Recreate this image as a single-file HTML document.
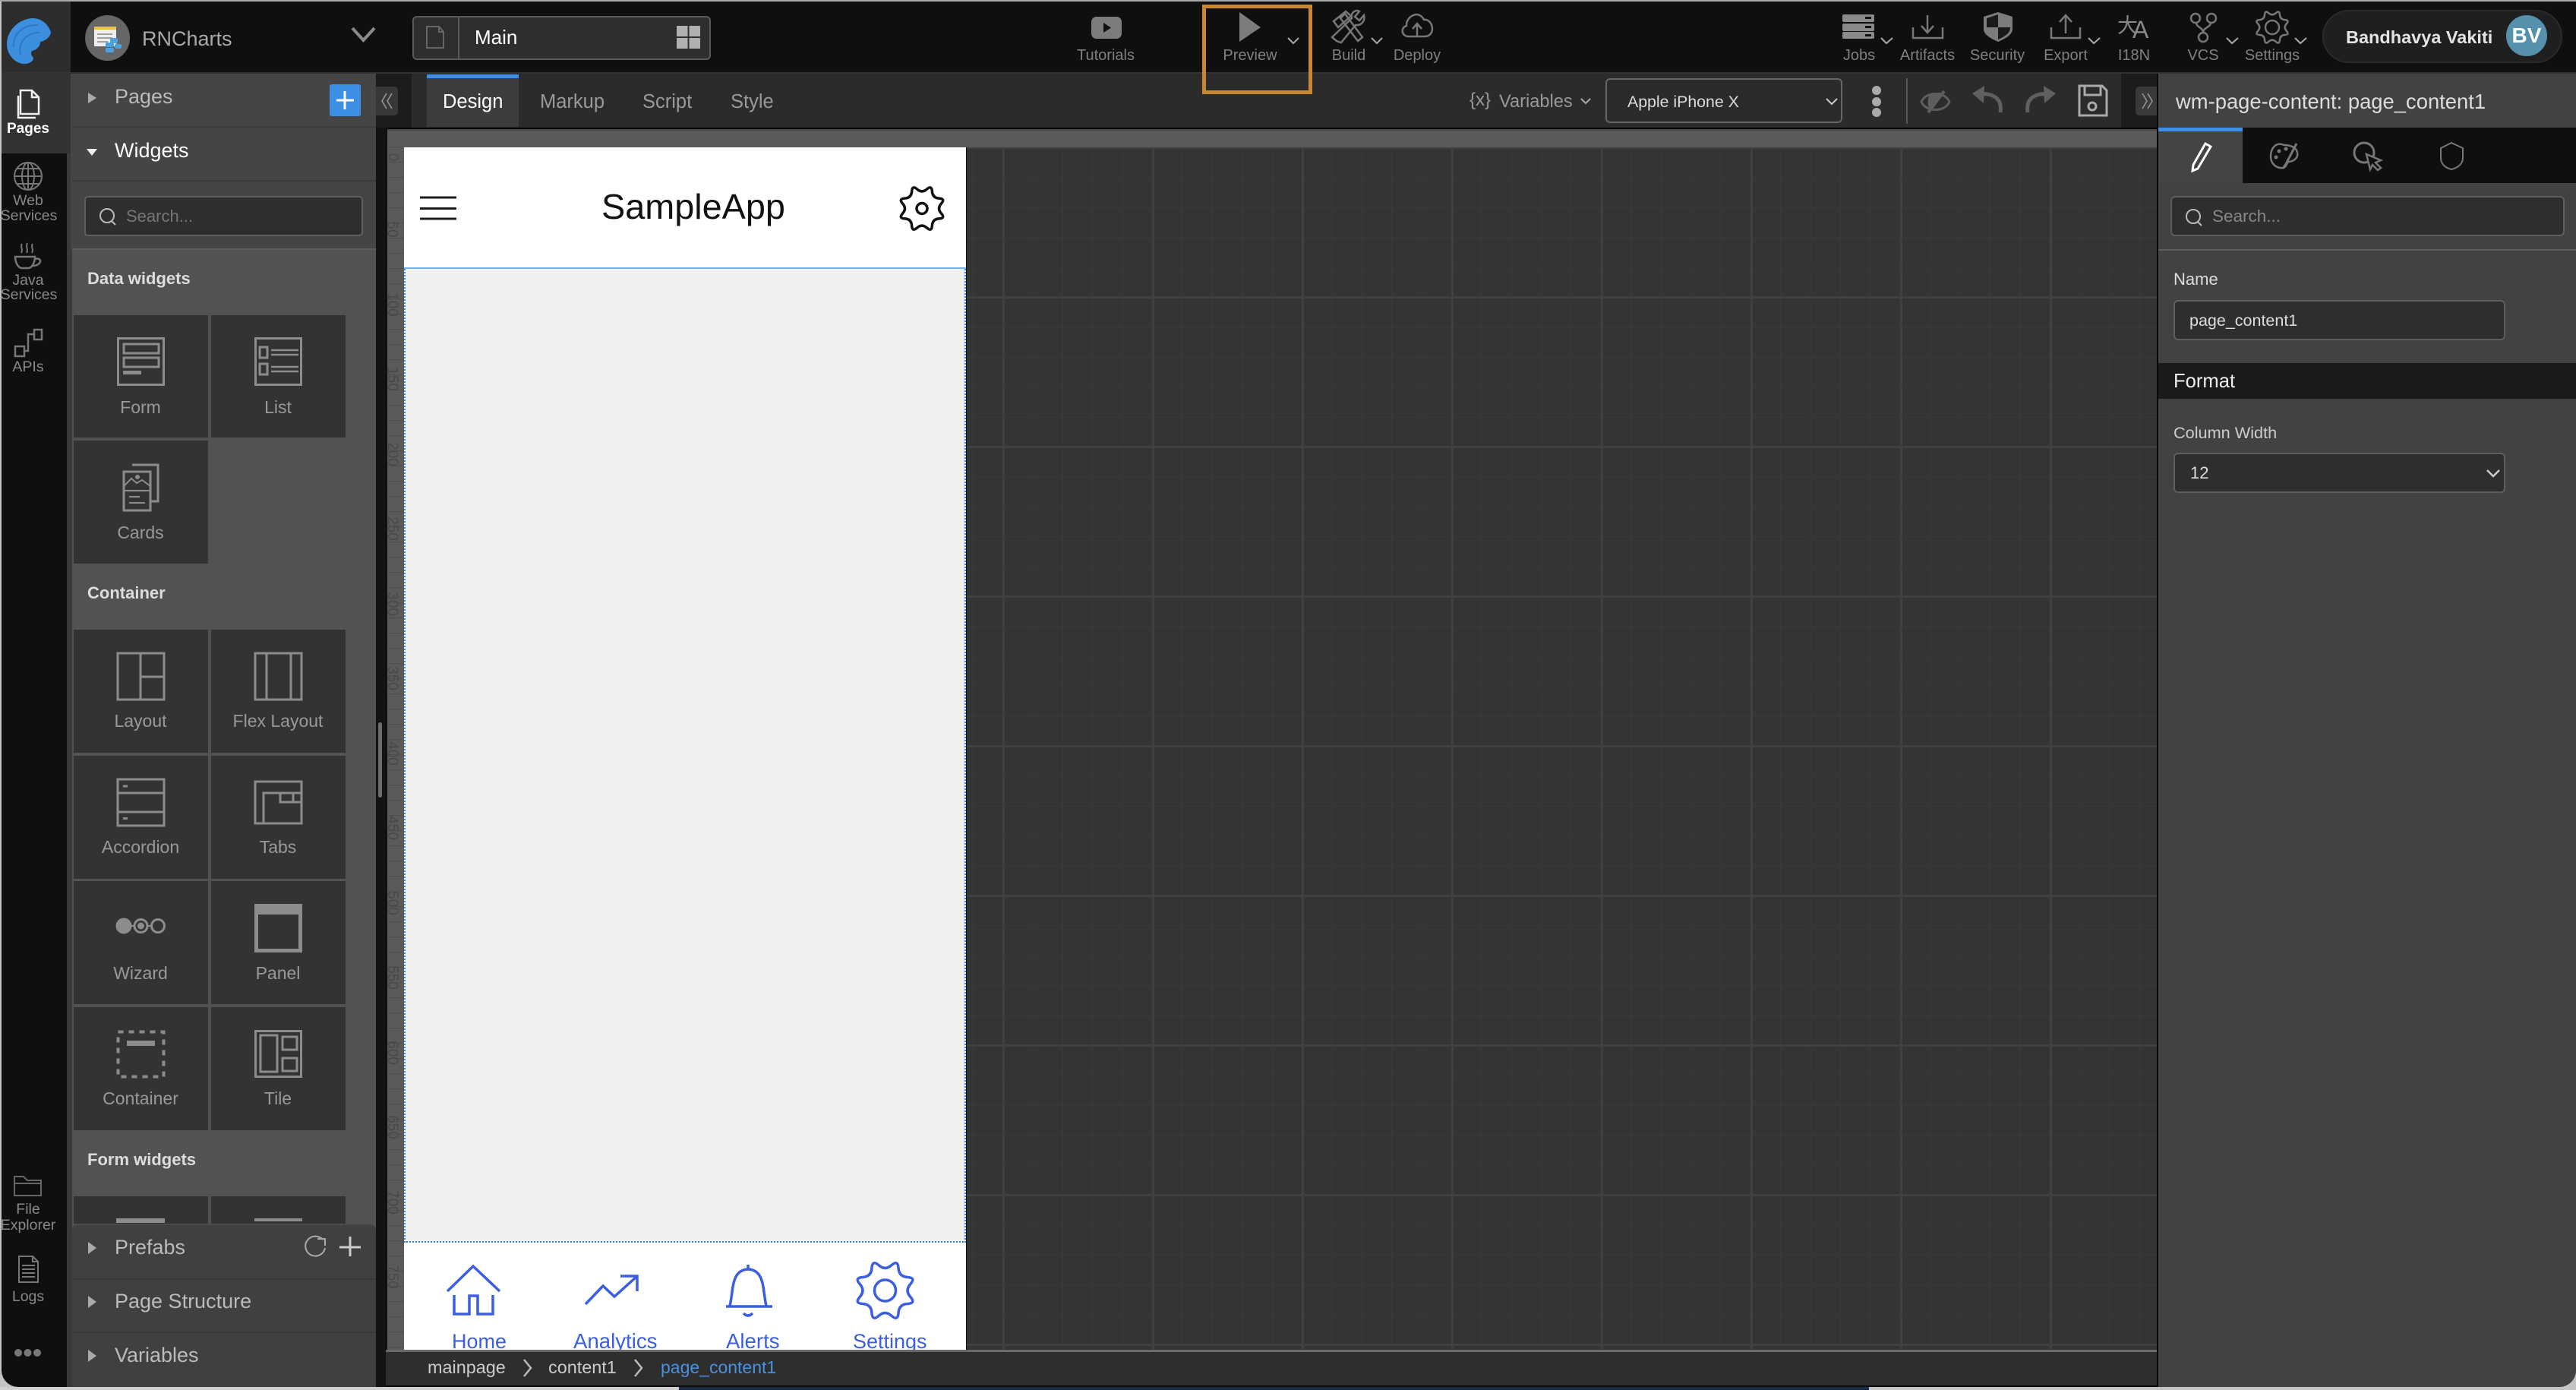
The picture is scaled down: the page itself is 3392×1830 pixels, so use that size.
<!DOCTYPE html>
<html><head><meta charset="utf-8"><title>RNCharts</title>
<style>
html,body{margin:0;padding:0;width:3392px;height:1830px;overflow:hidden;background:#c4c4c4}
*{box-sizing:border-box}
body{position:relative;font-family:"Liberation Sans",sans-serif}
.b{position:absolute}
.t{position:absolute;white-space:nowrap;line-height:40px;height:40px;margin-top:-20px}
.c{transform:translateX(-50%)}
.lb{font-size:23px;color:#999}
.tb{font-size:20px;color:#808080}
.tile{position:absolute;background:#333;width:177px}
.in{position:absolute;background:#2e2e2e;border:2px solid #5e5e5e;border-radius:6px}
svg{position:absolute;left:0;top:0}
</style></head><body>
<div class="b" style="left:0;top:1826px;width:894px;height:4px;background:#d0d0d0"></div>
<div class="b" style="left:894px;top:1826px;width:1567px;height:4px;background:#1a2c4a"></div>
<div class="b" style="left:2px;top:2px;width:3390px;height:1824px;background:#0f0f0f;border-radius:0 0 22px 22px;overflow:hidden" id="frame"></div>
<div class="b" style="left:0;top:0;width:3392px;height:2px;background:#a8a8a8"></div>

<!-- logo block -->
<div class="b" style="left:2px;top:2px;width:91px;height:93px;background:#2d2d2d"></div>
<!-- row2 separators -->
<div class="b" style="left:2px;top:95px;width:3390px;height:2px;background:#333"></div>
<!-- rail -->
<div class="b" style="left:2px;top:97px;width:91px;height:105px;background:#333"></div>
<div class="b" style="left:88px;top:202px;width:7px;height:1624px;background:#3a3a3a"></div>
<!-- left panel -->
<div class="b" style="left:93px;top:97px;width:402px;height:232px;background:#454545"></div>
<div class="b" style="left:95px;top:166px;width:400px;height:2px;background:#3a3a3a"></div>
<div class="b" style="left:95px;top:237px;width:400px;height:2px;background:#3a3a3a"></div>
<div class="b" style="left:95px;top:327px;width:400px;height:2px;background:#5c5c5c"></div>
<div class="b" style="left:95px;top:329px;width:400px;height:1300px;background:#525252"></div>
<div class="in" style="left:111px;top:258px;width:367px;height:53px;border-radius:5px"></div>
<div class="b" style="left:434px;top:111px;width:41px;height:42px;background:#3d8fe6;border-radius:3px"></div>

<!-- tiles -->
<div class="tile" style="left:97px;top:415px;height:161px"></div>
<div class="tile" style="left:278px;top:415px;height:161px"></div>
<div class="tile" style="left:97px;top:580px;height:162px"></div>
<div class="tile" style="left:97px;top:829px;height:162px"></div>
<div class="tile" style="left:278px;top:829px;height:162px"></div>
<div class="tile" style="left:97px;top:995px;height:162px"></div>
<div class="tile" style="left:278px;top:995px;height:162px"></div>
<div class="tile" style="left:97px;top:1160px;height:162px"></div>
<div class="tile" style="left:278px;top:1160px;height:162px"></div>
<div class="tile" style="left:97px;top:1326px;height:162px"></div>
<div class="tile" style="left:278px;top:1326px;height:162px"></div>
<div class="tile" style="left:97px;top:1575px;height:36px"></div>
<div class="tile" style="left:278px;top:1575px;height:36px"></div>
<div class="b" style="left:153px;top:1604px;width:64px;height:6px;background:#8c8c8c"></div>
<div class="b" style="left:335px;top:1604px;width:63px;height:4px;background:#8c8c8c"></div>

<!-- bottom accordion -->
<div class="b" style="left:95px;top:1611px;width:400px;height:215px;background:#404040;border-radius:8px 8px 0 0;border-top:2px solid #4a4a4a"></div>
<div class="b" style="left:95px;top:1683px;width:400px;height:2px;background:#383838"></div>
<div class="b" style="left:95px;top:1753px;width:400px;height:2px;background:#383838"></div>

<!-- gutter -->
<div class="b" style="left:495px;top:97px;width:13px;height:1729px;background:#131313"></div>
<div class="b" style="left:495px;top:97px;width:47px;height:71px;background:#1c1c1c"></div>
<div class="b" style="left:495px;top:114px;width:29px;height:38px;background:#383838;border-radius:0 5px 5px 0"></div>

<!-- toolbar -->
<div class="b" style="left:542px;top:97px;width:2251px;height:71px;background:#2b2b2b"></div>
<div class="b" style="left:2793px;top:97px;width:47px;height:71px;background:#1c1c1c"></div>
<div class="b" style="left:562px;top:98px;width:121px;height:69px;background:#3c3c3c"></div>
<div class="b" style="left:562px;top:98px;width:121px;height:5px;background:#3d8fe6"></div>
<div class="b" style="left:508px;top:168px;width:2332px;height:2px;background:#050505"></div>
<div class="b" style="left:2114px;top:103px;width:312px;height:59px;background:#2b2b2b;border:2px solid #666;border-radius:6px"></div>
<div class="b" style="left:2510px;top:103px;width:2px;height:60px;background:#555"></div>
<div class="b" style="left:2812px;top:114px;width:30px;height:38px;background:#3a3a3a;border-radius:5px 0 0 5px"></div>

<!-- rulers -->
<div class="b" style="left:510px;top:170px;width:2330px;height:24px;background:#5a5a5a"></div>
<div class="b" style="left:510px;top:170px;width:22px;height:1607px;background:repeating-linear-gradient(180deg,#5a5a5a 0,#5a5a5a 19px,#4e4e4e 19px,#4e4e4e 20px) 0 4px"></div>
<div class="b" style="left:510px;top:170px;width:2330px;height:2px;background:#4a4a4a"></div>
<!-- canvas -->
<div class="b" style="left:532px;top:194px;width:2308px;height:1583px;background-color:#343434;background-image:linear-gradient(90deg,#404040 3px,transparent 3px),linear-gradient(180deg,#404040 3px,transparent 3px),linear-gradient(90deg,#383838 1.500px,transparent 1.500px),linear-gradient(180deg,#383838 1.500px,transparent 1.500px);background-size:197px 197px,197px 197px,39.4px 39.4px,39.4px 39.4px;background-position:0 -1px,0 -1px,0 0,0 0"></div>
<!-- phone -->
<div class="b" style="left:532px;top:194px;width:741px;height:1583px;background:#fff;border-right:1px solid #111"></div>
<div class="b" style="left:532px;top:352px;width:740px;height:2px;background:#6fb1f2"></div>
<div class="b" style="left:532px;top:354px;width:740px;height:1282px;background:#f0f0f0;border:2px dotted #2d86e6;border-top:0"></div>
<!-- breadcrumb -->
<div class="b" style="left:508px;top:1777px;width:2332px;height:3px;background:#6a6a6a"></div>
<div class="b" style="left:508px;top:1780px;width:2332px;height:46px;background:#2e2e2e;border-bottom:2px solid #0a0a0a"></div>
<!-- right panel -->
<div class="b" style="left:2840px;top:97px;width:2px;height:1729px;background:#0a0a0a"></div>
<div class="b" style="left:2842px;top:97px;width:550px;height:1729px;background:#424242;border-radius:0 0 22px 0"></div>
<div class="b" style="left:2842px;top:168px;width:550px;height:73px;background:#0f0f0f"></div>
<div class="b" style="left:2842px;top:168px;width:111px;height:73px;background:#444"></div>
<div class="b" style="left:2842px;top:168px;width:111px;height:5px;background:#3d8fe6"></div>
<div class="in" style="left:2858px;top:258px;width:519px;height:53px"></div>
<div class="b" style="left:2842px;top:328px;width:550px;height:2px;background:#5e5e5e"></div>
<div class="in" style="left:2862px;top:395px;width:437px;height:53px"></div>
<div class="b" style="left:2842px;top:478px;width:550px;height:47px;background:#1a1a1a"></div>
<div class="in" style="left:2862px;top:596px;width:437px;height:53px"></div>

<!-- page selector + pill -->
<div class="b" style="left:543px;top:21px;width:393px;height:58px;background:#2e2e2e;border:2px solid #5a5a5a;border-radius:6px"></div>
<div class="b" style="left:603px;top:22px;width:2px;height:56px;background:#5a5a5a"></div>
<div class="b" style="left:3058px;top:13px;width:316px;height:70px;background:#1f1f1f;border:2px solid #2a2a2a;border-radius:35px"></div>
<div class="b" style="left:3300px;top:20px;width:54px;height:54px;border-radius:50%;background:#5591ac"></div>

<!-- TEXT -->
<div class="t" style="left:187px;top:51px;font-size:27px;color:#aaa">RNCharts</div>
<div class="t" style="left:625px;top:49px;font-size:26px;color:#fff">Main</div>
<div class="t" style="left:151px;top:127px;font-size:27px;color:#bbb">Pages</div>
<div class="t" style="left:151px;top:198px;font-size:27px;color:#fff">Widgets</div>
<div class="t" style="left:166px;top:285px;font-size:22px;color:#777">Search...</div>
<div class="t" style="left:115px;top:367px;font-size:22px;font-weight:bold;color:#ddd">Data widgets</div>
<div class="t" style="left:115px;top:781px;font-size:22px;font-weight:bold;color:#ddd">Container</div>
<div class="t" style="left:115px;top:1527px;font-size:22px;font-weight:bold;color:#ddd">Form widgets</div>
<div class="t c lb" style="left:185px;top:536px">Form</div>
<div class="t c lb" style="left:366px;top:536px">List</div>
<div class="t c lb" style="left:185px;top:701px">Cards</div>
<div class="t c lb" style="left:185px;top:949px">Layout</div>
<div class="t c lb" style="left:366px;top:949px">Flex Layout</div>
<div class="t c lb" style="left:185px;top:1115px">Accordion</div>
<div class="t c lb" style="left:366px;top:1115px">Tabs</div>
<div class="t c lb" style="left:185px;top:1281px">Wizard</div>
<div class="t c lb" style="left:366px;top:1281px">Panel</div>
<div class="t c lb" style="left:185px;top:1446px">Container</div>
<div class="t c lb" style="left:366px;top:1446px">Tile</div>
<div class="t" style="left:151px;top:1642px;font-size:27px;color:#bbb">Prefabs</div>
<div class="t" style="left:151px;top:1713px;font-size:27px;color:#bbb">Page Structure</div>
<div class="t" style="left:151px;top:1784px;font-size:27px;color:#bbb">Variables</div>

<div class="t c" style="left:37px;top:170px;font-size:19px;font-weight:bold;color:#fff">Pages</div>
<div class="t c" style="left:37px;top:264px;font-size:19.5px;color:#888">Web</div>
<div class="t c" style="left:38px;top:284px;font-size:19.5px;color:#888">Services</div>
<div class="t c" style="left:37px;top:369px;font-size:19.5px;color:#888">Java</div>
<div class="t c" style="left:38px;top:388px;font-size:19.5px;color:#888">Services</div>
<div class="t c" style="left:37px;top:483px;font-size:19.5px;color:#888">APIs</div>
<div class="t c" style="left:37px;top:1592px;font-size:19.5px;color:#888">File</div>
<div class="t c" style="left:37px;top:1613px;font-size:19.5px;color:#888">Explorer</div>
<div class="t c" style="left:37px;top:1707px;font-size:19.5px;color:#888">Logs</div>

<div class="t" style="left:583px;top:134px;font-size:25.5px;color:#fff">Design</div>
<div class="t" style="left:711px;top:134px;font-size:25.5px;color:#999">Markup</div>
<div class="t" style="left:846px;top:134px;font-size:25.5px;color:#999">Script</div>
<div class="t" style="left:962px;top:134px;font-size:25.5px;color:#999">Style</div>
<div class="t" style="left:1935px;top:132px;font-size:24px;color:#999">{x}</div>
<div class="t" style="left:1974px;top:134px;font-size:23.600px;color:#999">Variables</div>
<div class="t" style="left:2143px;top:134px;font-size:21.3px;color:#ddd">Apple iPhone X</div>
<div class="t" style="left:2865px;top:134px;font-size:27.4px;color:#ddd">wm-page-content: page_content1</div>

<div class="t c tb" style="left:1456px;top:73px">Tutorials</div>
<div class="t c tb" style="left:1646px;top:73px">Preview</div>
<div class="t c tb" style="left:1776px;top:73px">Build</div>
<div class="t c tb" style="left:1866px;top:73px">Deploy</div>
<div class="t c tb" style="left:2448px;top:73px">Jobs</div>
<div class="t c tb" style="left:2538px;top:73px">Artifacts</div>
<div class="t c tb" style="left:2630px;top:73px">Security</div>
<div class="t c tb" style="left:2720px;top:73px">Export</div>
<div class="t c tb" style="left:2810px;top:73px">I18N</div>
<div class="t c tb" style="left:2901px;top:73px">VCS</div>
<div class="t c tb" style="left:2992px;top:73px">Settings</div>
<div class="t" style="left:3089px;top:49px;font-size:23.5px;font-weight:bold;color:#e4e4e4">Bandhavya Vakiti</div>
<div class="t c" style="left:3327px;top:47px;font-size:28px;font-weight:bold;color:#fff">BV</div>

<div class="t" style="left:2913px;top:285px;font-size:22.5px;color:#888">Search...</div>
<div class="t" style="left:2862px;top:368px;font-size:22px;color:#ddd">Name</div>
<div class="t" style="left:2883px;top:422px;font-size:21.5px;color:#ddd">page_content1</div>
<div class="t" style="left:2862px;top:502px;font-size:25.6px;color:#eee">Format</div>
<div class="t" style="left:2862px;top:570px;font-size:21.7px;color:#ccc">Column Width</div>
<div class="t" style="left:2884px;top:623px;font-size:22px;color:#ddd">12</div>

<div class="t" style="left:792px;top:272px;font-size:46.8px;color:#111">SampleApp</div>
<div class="b" style="left:532px;top:1750px;width:740px;height:27px;overflow:hidden">
  <div class="t" style="left:63px;top:16px;font-size:27px;color:#3b5fe0">Home</div>
  <div class="t" style="left:223px;top:16px;font-size:27.6px;color:#3b5fe0">Analytics</div>
  <div class="t" style="left:424px;top:16px;font-size:27.6px;color:#3b5fe0">Alerts</div>
  <div class="t" style="left:591px;top:16px;font-size:27px;color:#3b5fe0">Settings</div>
</div>
<div class="t" style="left:563px;top:1800px;font-size:23.4px;color:#ccc">mainpage</div>
<div class="t" style="left:722px;top:1800px;font-size:23.4px;color:#ccc">content1</div>
<div class="t" style="left:870px;top:1800px;font-size:23px;color:#4a90e2">page_content1</div>

<!-- ruler numbers -->
<div class="t" style="left:511px;top:207px;font-size:19px;color:#484848;transform:rotate(90deg)">0</div>
<div class="t" style="left:505px;top:302px;font-size:19px;color:#484848;transform:rotate(90deg)">50</div>
<div class="t" style="left:500px;top:401px;font-size:19px;color:#484848;transform:rotate(90deg)">100</div>
<div class="t" style="left:500px;top:499px;font-size:19px;color:#484848;transform:rotate(90deg)">150</div>
<div class="t" style="left:500px;top:598px;font-size:19px;color:#484848;transform:rotate(90deg)">200</div>
<div class="t" style="left:500px;top:696px;font-size:19px;color:#484848;transform:rotate(90deg)">250</div>
<div class="t" style="left:500px;top:795px;font-size:19px;color:#484848;transform:rotate(90deg)">300</div>
<div class="t" style="left:500px;top:893px;font-size:19px;color:#484848;transform:rotate(90deg)">350</div>
<div class="t" style="left:500px;top:992px;font-size:19px;color:#484848;transform:rotate(90deg)">400</div>
<div class="t" style="left:500px;top:1090px;font-size:19px;color:#484848;transform:rotate(90deg)">450</div>
<div class="t" style="left:500px;top:1189px;font-size:19px;color:#484848;transform:rotate(90deg)">500</div>
<div class="t" style="left:500px;top:1287px;font-size:19px;color:#484848;transform:rotate(90deg)">550</div>
<div class="t" style="left:500px;top:1386px;font-size:19px;color:#484848;transform:rotate(90deg)">600</div>
<div class="t" style="left:500px;top:1484px;font-size:19px;color:#484848;transform:rotate(90deg)">650</div>
<div class="t" style="left:500px;top:1583px;font-size:19px;color:#484848;transform:rotate(90deg)">700</div>
<div class="t" style="left:500px;top:1681px;font-size:19px;color:#484848;transform:rotate(90deg)">750</div>

<!-- ICONS -->
<svg width="3392" height="1830" viewBox="0 0 3392 1830" fill="none" stroke-linecap="butt">
<defs>
<path id="gear" vector-effect="non-scaling-stroke" d="M43.8 -11.1 Q34 0 43.8 11.1 Q53.6 22.2 38.8 23.1 Q24 24 23.1 38.8 Q22.2 53.6 11.1 43.8 Q0 34 -11.1 43.8 Q-22.2 53.6 -23.1 38.8 Q-24 24 -38.8 23.1 Q-53.6 22.2 -43.8 11.1 Q-34 0 -43.8 -11.1 Q-53.6 -22.2 -38.8 -23.1 Q-24 -24 -23.1 -38.8 Q-22.2 -53.6 -11.1 -43.8 Q0 -34 11.1 -43.8 Q22.2 -53.6 23.1 -38.8 Q24 -24 38.8 -23.1 Q53.6 -22.2 43.8 -11.1Z"/>
</defs>
<!-- logo -->
<path d="M42 24C22 26 9 42 9 58C9 72 20 84 32 84C40 84 44 80 44 76C41 73 40 70 42 67C50 65 53 60 53 55C60 54 67 48 67 42C62 30 54 24 42 24Z" fill="#3c8fdf"/>
<path d="M18 62C16 46 30 32 50 33M27 72C23 56 35 43 52 43" stroke="#2f78c0" stroke-width="2"/>
<!-- avatar -->
<ellipse cx="141.6" cy="50" rx="29.5" ry="30" fill="#666"/>
<rect x="124" y="35" width="29" height="26" fill="#eee"/><rect x="124" y="35" width="29" height="4" fill="#e8c24a"/>
<path d="M128 45H148M128 50H148M128 55H142" stroke="#888" stroke-width="1.5"/>
<rect x="145" y="50" width="10" height="7" rx="2" fill="#4aa3e0"/><rect x="139" y="56" width="11" height="6" rx="2" fill="#4aa3e0"/><rect x="139" y="63" width="11" height="6" rx="2" fill="#4aa3e0"/><rect x="151" y="58" width="9" height="6" rx="2" fill="#4aa3e0"/>
<!-- project chevron -->
<path d="M464 37L478.500 53L493 37" stroke="#8a8a8a" stroke-width="4"/>
<!-- file icon -->
<path d="M562 35H578L584 42V63H562Z M578 35V42H584" stroke="#666" stroke-width="2"/>
<!-- grid -->
<g fill="#b0b0b0"><rect x="891" y="34" width="14.500" height="14"/><rect x="907.500" y="34" width="14.500" height="14"/><rect x="891" y="50" width="14.500" height="14"/><rect x="907.500" y="50" width="14.500" height="14"/></g>
<!-- rail icons -->
<path d="M27 119H42L51 128V150H27Z M42 119V128H51 M24 126V155H47" stroke="#f0f0f0" stroke-width="2.500"/>
<g stroke="#777" stroke-width="2"><circle cx="37" cy="232" r="18"/><ellipse cx="37" cy="232" rx="8" ry="18"/><path d="M37 214V250M19 232H55M22 222H52M22 242H52"/></g>
<path d="M29 321C26 325 31 328 28 333M36 320C33 325 38 328 35 333M43 321C40 325 45 328 42 333" stroke="#777" stroke-width="2"/>
<path d="M20 338H46C46 346 42 352 38 353H28C24 352 20 346 20 338Z M46 341C56 338 56 350 42 350" stroke="#777" stroke-width="2.500"/>
<path d="M20 456H32V469H20Z M45 434H55V447H45Z M32 462H37V440H45" stroke="#777" stroke-width="2.500"/>
<path d="M19 1574V1549H31L36 1554H54V1574Z M19 1558H54" stroke="#666" stroke-width="2"/>
<path d="M25 1654H43L50 1661V1688H25Z M43 1654V1661H50 M29 1666H46M29 1671H46M29 1676H46M29 1681H46" stroke="#777" stroke-width="2"/>
<g fill="#777"><circle cx="24" cy="1781" r="5"/><circle cx="36.500" cy="1781" r="5"/><circle cx="49" cy="1781" r="5"/></g>
<!-- triangles -->
<g fill="#aaa"><path d="M116 122L127 129L116 136Z"/><path d="M114 196H128L121 205Z" fill="#eee"/><path d="M116 1635L127 1643L116 1651Z"/><path d="M116 1706L127 1714L116 1722Z"/><path d="M116 1777L127 1785L116 1793Z"/></g>
<!-- plus button -->
<path d="M454 120V144M443 132H466" stroke="#fff" stroke-width="3"/>
<path d="M509 123L503 133L509 143M516 123L510 133L516 143" stroke="#999" stroke-width="1.500"/>
<!-- search icons -->
<g stroke="#bbb" stroke-width="2"><circle cx="141" cy="284" r="9"/><path d="M147 291L152 296"/><circle cx="2888" cy="285" r="9"/><path d="M2894 292L2899 297"/></g>
<!-- prefabs actions -->
<path d="M425 1632A13 13 0 1 0 428 1643M418 1631H428V1640" stroke="#aaa" stroke-width="2"/>
<path d="M461 1628V1654M447 1642H475" stroke="#ccc" stroke-width="3"/>
<!-- widget icons -->
<g stroke="#8c8c8c" stroke-width="3">
<rect x="155.500" y="445.500" width="60" height="61"/><rect x="163" y="453" width="46" height="12"/><rect x="163" y="471" width="46" height="12"/>
<rect x="162" y="488" width="24" height="5" fill="#8c8c8c" stroke="none"/>
<rect x="336.500" y="445.500" width="60" height="61"/><rect x="342" y="457" width="10" height="14"/><rect x="342" y="479" width="10" height="14"/>
<path d="M357 461H393M357 467H393M357 483H393M357 489H393" stroke-width="2.500"/>
<path d="M174 612H208V660H199" /><rect x="163" y="621" width="35" height="51"/><path d="M163 646H198M163 640L173 630L180 636L187 632L198 640M170 654H184M170 662H191" stroke-width="2"/><circle cx="181" cy="628" r="1.500" fill="#8c8c8c"/>
<rect x="155" y="860" width="61" height="61"/><path d="M185 860V921M185 891H216"/>
<rect x="336" y="860" width="61" height="61"/><path d="M351 860V921M383 860V921"/>
<rect x="155" y="1026" width="61" height="61"/><path d="M155 1044H216M155 1069H216"/>
<path d="M162 1035H168M162 1077.500H168" stroke-width="3"/>
<rect x="336" y="1029" width="61" height="55"/><path d="M347 1084V1044H369V1056H397M369 1044H397M386 1044V1056"/>
<circle cx="163" cy="1219" r="9" fill="#8c8c8c"/><circle cx="185.500" cy="1219" r="8.500"/><circle cx="185.500" cy="1219" r="3" fill="#8c8c8c"/><circle cx="208" cy="1219" r="8.500"/><path d="M172 1219H177M194 1219H199" stroke-width="2"/>
<rect x="337.500" y="1192.500" width="58" height="59" stroke-width="5"/><rect x="335" y="1190" width="63" height="14" fill="#8c8c8c" stroke="none"/>
<rect x="155.500" y="1358.500" width="60" height="59" stroke-width="4" stroke-dasharray="7 7"/><rect x="167" y="1370" width="37" height="7" fill="#8c8c8c" stroke="none"/>
<rect x="336.500" y="1357.500" width="60" height="60"/><rect x="343" y="1363" width="22" height="48"/><rect x="372" y="1365" width="19" height="17"/><rect x="372" y="1393" width="19" height="17"/>
</g>
<!-- top bar icons -->
<rect x="1437" y="22" width="40" height="29" rx="7" fill="#7c7c7c"/><path d="M1453 30L1463 36.500L1453 43Z" fill="#111"/>
<path d="M1632 16L1660 36L1632 55Z" fill="#7c7c7c"/>
<rect x="1585.500" y="8.500" width="140" height="113" stroke="#c9882f" stroke-width="5"/>
<g stroke="#aaa" stroke-width="2"><path d="M1696 50L1703 57L1710 50M1806 50L1813 57L1820 50M2477 50L2484 57L2492 50M2750 50L2757 57L2765 50M2932 50L2939 57L2947 50M3022 50L3029 57L3037 50"/></g>
<g stroke="#777" stroke-width="2.500"><path d="M1788 54L1794 49L1771 18L1765 24Z M1756 28L1772 15L1779 21L1762 36Z"/>
<path d="M1760 54L1754 49L1780 24C1778 16 1786 12 1790 15L1784 22L1790 27L1796 20C1798 28 1792 34 1785 33L1766 56Z"/></g>
<path d="M1855 48C1845 48 1844 36 1852 34C1851 22 1868 12 1875 26C1886 24 1892 46 1877 48Z M1866 47V32M1860 38L1866 31L1872 38" stroke="#777" stroke-width="2.500"/>
<g fill="#8a8a8a"><rect x="2426" y="19" width="42" height="10" rx="2"/><rect x="2426" y="31" width="42" height="10" rx="2"/><rect x="2426" y="42" width="42" height="9" rx="2"/></g>
<g fill="#111"><rect x="2456" y="22" width="8" height="3"/><rect x="2456" y="34" width="8" height="3"/><rect x="2456" y="45" width="8" height="3"/></g>
<path d="M2519 36V50H2558V36M2538 20V42M2530 34L2538 43L2546 34" stroke="#777" stroke-width="2.500"/>
<path d="M2631 16L2650 22V38C2650 46 2640 51 2631 55C2622 51 2612 46 2612 38V22Z" fill="#7c7c7c"/><path d="M2631 19L2616 24V36H2631ZM2631 36V52C2640 48 2647 44 2647 36Z" fill="#1a1a1a"/>
<path d="M2701 36V50H2739V36M2720 44V21M2712 29L2720 20L2728 29" stroke="#777" stroke-width="2.500"/>
<text x="2788" y="43" font-family="'Liberation Sans','Noto Sans CJK SC',sans-serif" font-size="27" fill="#888">大</text><text x="2808" y="50" font-family="'Liberation Sans',sans-serif" font-size="32" fill="#888">A</text>
<g stroke="#777" stroke-width="2.500"><circle cx="2891" cy="24" r="6"/><circle cx="2912" cy="24" r="6"/><circle cx="2901" cy="49" r="6"/><path d="M2892 30C2892 36 2901 36 2901 43M2911 30C2911 36 2901 36 2901 43"/></g>
<use href="#gear" transform="translate(2992,36) scale(.43)" stroke="#777" stroke-width="2.500"/><circle cx="2992" cy="36" r="9" stroke="#777" stroke-width="2.500"/>
<!-- toolbar icons -->
<path d="M2082 130L2088 136L2094 130" stroke="#aaa" stroke-width="2"/>
<path d="M2405 130L2412 137L2419 130" stroke="#ccc" stroke-width="2"/>
<g fill="#aaa"><circle cx="2471" cy="119" r="6"/><circle cx="2471" cy="134" r="6"/><circle cx="2471" cy="148" r="6"/></g>
<path d="M2530 134C2536 120 2561 120 2567 134C2561 148 2536 148 2530 134Z" stroke="#5e5e5e" stroke-width="3"/><path d="M2546 122C2536 124 2537 142 2543 146L2558 122Z" fill="#5e5e5e"/><path d="M2539 148L2560 120" stroke="#5e5e5e" stroke-width="4"/>
<path d="M2634 148C2637 128 2622 122 2606 124" stroke="#606060" stroke-width="5"/><path d="M2597 123L2613 113L2612 136Z" fill="#606060"/>
<path d="M2670 148C2667 128 2682 122 2698 124" stroke="#606060" stroke-width="5"/><path d="M2707 123L2691 113L2692 136Z" fill="#606060"/>
<g stroke="#aaa" stroke-width="3"><path d="M2738 113H2768L2774 119V152H2738Z"/><path d="M2745 113V125H2766V113"/><circle cx="2755" cy="140" r="5"/></g>
<path d="M2821 123L2827 133L2821 143M2828 123L2834 133L2828 143" stroke="#999" stroke-width="1.500"/>
<!-- right panel tab icons -->
<path d="M2904 189L2911 193L2894 222L2887 225L2888 217Z" stroke="#fff" stroke-width="3" fill="#444"/>
<path d="M3008 191C2996 186 2990 196 2990 206C2990 216 2998 222 3006 221C3012 220 3010 214 3014 213C3022 212 3028 206 3024 198C3022 194 3016 191 3008 191Z" stroke="#777" stroke-width="2.500"/>
<g fill="#777"><circle cx="3001" cy="199" r="2.500"/><circle cx="2997" cy="207" r="2.500"/><circle cx="3010" cy="196" r="2.500"/></g>
<path d="M3024 189L3010 216L3006 222" stroke="#777" stroke-width="3"/>
<circle cx="3113" cy="201" r="13" stroke="#777" stroke-width="3"/>
<path d="M3116 203L3135 211L3128 214L3135 221L3131 224L3124 217L3121 223Z" fill="#0f0f0f" stroke="#777" stroke-width="2.500"/>
<path d="M3228 188L3243 195V208C3243 216 3236 221 3228 223C3220 221 3214 216 3214 208V195Z" stroke="#777" stroke-width="2"/>
<!-- select chevron -->
<path d="M3275 619L3283 627L3291 619" stroke="#ccc" stroke-width="2.500"/>
<!-- phone header -->
<path d="M553 260H601M553 274.500H601M553 288H601" stroke="#1c1c1c" stroke-width="3"/>
<use href="#gear" transform="translate(1214,274.500) scale(.58)" stroke="#111" stroke-width="3.500"/><circle cx="1214" cy="274.500" r="7" stroke="#111" stroke-width="3.500"/>
<!-- footer icons -->
<g stroke="#3b5fe0" stroke-width="3.500">
<path d="M589 1700L623 1667L658 1700"/><path d="M598 1705V1730H618V1706H629V1730H649V1705"/>
<path d="M771 1717L794 1693L809 1707L838 1681M817 1680H839V1700"/>
<path d="M985 1665V1672M961 1719C966 1700 962 1672 985 1671C1008 1672 1004 1700 1009 1719M956 1720H1017M979 1729Q985 1735 991 1729"/>
</g>
<use href="#gear" transform="translate(1165.500,1699) scale(.76)" stroke="#3b5fe0" stroke-width="3.500"/><circle cx="1165.500" cy="1699" r="14" stroke="#3b5fe0" stroke-width="3.500"/>
<!-- breadcrumb chevrons -->
<path d="M690 1790L699 1801L690 1812M836 1790L845 1801L836 1812" stroke="#bbb" stroke-width="2.500"/>
<!-- scrollbar -->
<rect x="498" y="951" width="5" height="99" rx="2.500" fill="#6c6c6c"/>
</svg>
</body></html>
